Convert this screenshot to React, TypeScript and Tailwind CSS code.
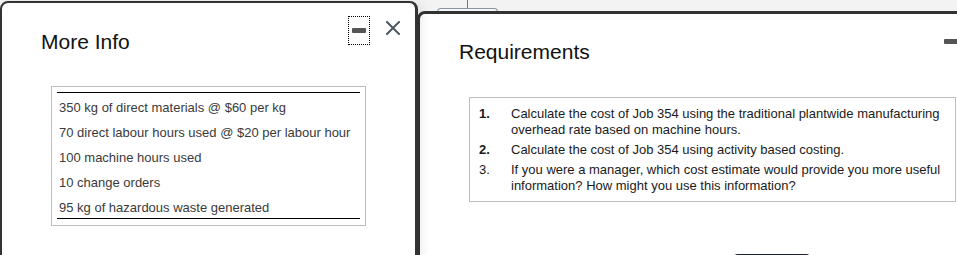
import React from 'react'

const rows = [
  '350 kg of direct materials @ $60 per kg',
  '70 direct labour hours used @ $20 per labour hour',
  '100 machine hours used',
  '10 change orders',
  '95 kg of hazardous waste generated',
]

const reqs = [
  { n: '1.', bold: true, text: 'Calculate the cost of Job 354 using the traditional plantwide manufacturing overhead rate based on machine hours.' },
  { n: '2.', bold: true, text: 'Calculate the cost of Job 354 using activity based costing.' },
  { n: '3.', bold: false, text: 'If you were a manager, which cost estimate would provide you more useful information? How might you use this information?' },
]

const MinusButton = ({ focused }: { focused?: boolean }) => (
  <div className={`w-[20px] h-[27px] flex items-center justify-center ${focused ? 'outline-1 outline-dotted outline-black' : ''}`}>
    <div className="w-[14px] h-[5px] bg-[#555] rounded-[1px]" />
  </div>
)

const CloseIcon = () => (
  <svg width="14" height="14" viewBox="0 0 14 14" className="mt-[4px]">
    <path d="M1 1 L13 13 M13 1 L1 13" stroke="#4d5863" strokeWidth="2" strokeLinecap="square" />
  </svg>
)

const App = () => {
  return (
    <div className="w-[957px] h-[255px] overflow-hidden bg-[#f3f3f3] flex font-['Liberation_Sans',Arial,sans-serif]">
      {/* More Info dialog */}
      <div className="relative z-10 shrink-0 w-[418px] h-[300px] mt-[1px] bg-white border-2 border-r-[3px] border-[#333] rounded-t-[8px] shadow-[4px_0_10px_rgba(0,0,0,0.08)]">
        <div className="flex items-start pl-[39px] pr-[15px]">
          <h2 className="mt-[27px] text-[21px] leading-[24px] text-[#111]">More Info</h2>
          <div className="ml-auto mt-[14px] flex items-start gap-[17px]">
            <MinusButton focused />
            <CloseIcon />
          </div>
        </div>
        <div className="ml-[49px] mt-[32px] w-[315px] border border-[#bdbdbd] px-[5px] pt-[5px] pb-[6px]">
          <div className="border-t border-b border-black">
            {rows.map((r, i) => (
              <div key={i} className="h-[25px] flex items-center pt-[4px] pl-[2px] text-[13px] text-[#3a3a3a]">{r}</div>
            ))}
          </div>
        </div>
      </div>

      {/* Requirements dialog */}
      <div className="shrink-0 flex flex-col -ml-[1px]">
        <div className="h-[11px] pl-[20px]">
          <div className="w-[61px] h-[11px]">
            <div className="mx-auto w-px h-[8px] bg-[#6b7a88]" />
            <div className="h-[4px] border border-b-0 border-[#8795a1] rounded-t-[4px] bg-[#f8f8f8]" />
          </div>
        </div>
        <div className="w-[593px] h-[300px] bg-white border-[3px] border-[#333] rounded-tl-[8px]">
          <div className="flex items-start pl-[39px] pr-[15px]">
            <h2 className="mt-[26px] text-[21px] leading-[24px] text-[#111]">Requirements</h2>
            <div className="ml-auto mt-[14px] flex items-start gap-[17px]">
              <MinusButton />
              <CloseIcon />
            </div>
          </div>
          <div className="ml-[49px] mt-[33px] w-[487px] border border-[#bdbdbd] pl-[9px] pr-[10px] pt-[8px] pb-[7px] flex flex-col gap-[4px]">
            {reqs.map((q) => (
              <div key={q.n} className="flex text-[13px] leading-[16px] text-[#1a1a1a]">
                <div className={`w-[32px] shrink-0 ${q.bold ? 'font-bold' : ''}`}>{q.n}</div>
                <div>{q.text}</div>
              </div>
            ))}
          </div>
          <div className="ml-[312px] mt-[52px] w-[80px] h-[32px] rounded-[6px] bg-[#1c2030]" />
        </div>
      </div>
    </div>
  )
}

export default App
